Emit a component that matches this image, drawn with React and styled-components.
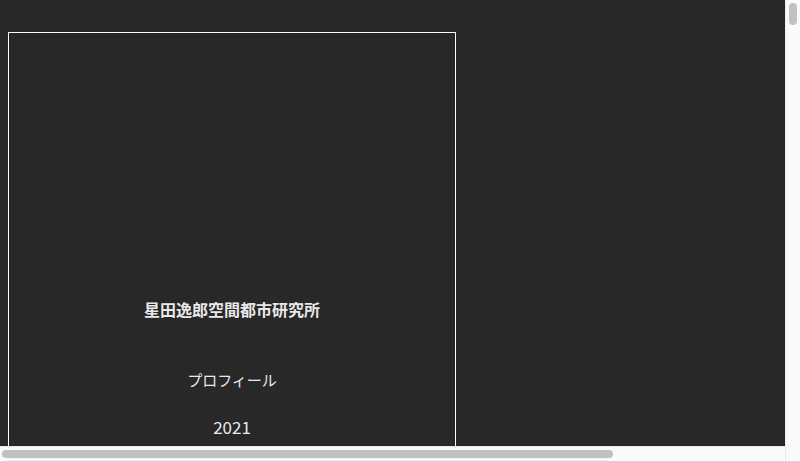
import React from "react";
import styled, { createGlobalStyle } from "styled-components";

const Global = createGlobalStyle`
  html, body { background: #282828; }
  body {
    margin: 8px;
    color: #e6e6e6;
    font-family: "Noto Sans CJK JP", "Noto Sans", sans-serif;
  }
`;

const Page = styled.div`
  width: 1000px;
  padding-top: 24px;
`;

const Frame = styled.section`
  width: 448px;
  box-sizing: border-box;
  height: 9000px;
  border: 1px solid #ffffff;
  display: flex;
  flex-direction: column;
  align-items: center;
`;

const Hero = styled.div`
  height: 264px;
  flex: none;
`;

const Title = styled.h1`
  margin: 0;
  font-size: 16px;
  font-weight: 700;
  line-height: 24px;
  color: #e8e8e8;
`;

const NavItem = styled.p`
  margin: ${(p) => p.$top}px 0 0;
  font-size: ${(p) => p.$size}px;
  font-weight: 400;
  line-height: 24px;
  color: #e8e8e8;
`;

/* scrollbar chrome, drawn over the page */
const VBar = styled.div`
  position: fixed;
  top: 0;
  right: 0;
  width: 15px;
  height: 100vh;
  background: #fafafa;
  border-left: 1px solid #ececec;
  box-sizing: border-box;
  display: flex;
  justify-content: center;
  padding-top: 3px;
`;

const HBar = styled.div`
  position: fixed;
  left: 0;
  bottom: 0;
  width: 100vw;
  height: 15px;
  background: #fafafa;
  border-top: 1px solid #ececec;
  box-sizing: border-box;
  display: flex;
  align-items: center;
  padding-left: 2px;
`;

const Thumb = styled.div`
  background: #c1c1c1;
  border-radius: 4px;
  width: ${(p) => p.$w}px;
  height: ${(p) => p.$h}px;
`;

export default function App() {
  return (
    <>
      <Global />
      <Page>
        <Frame>
          <Hero />
          <Title>星田逸郎空間都市研究所</Title>
          <NavItem $top={47} $size={15}>プロフィール</NavItem>
          <NavItem $top={23} $size={17}>2021</NavItem>
        </Frame>
      </Page>
      <HBar>
        <Thumb $w={611} $h={8} />
      </HBar>
      <VBar>
        <Thumb $w={8} $h={22} />
      </VBar>
    </>
  );
}
